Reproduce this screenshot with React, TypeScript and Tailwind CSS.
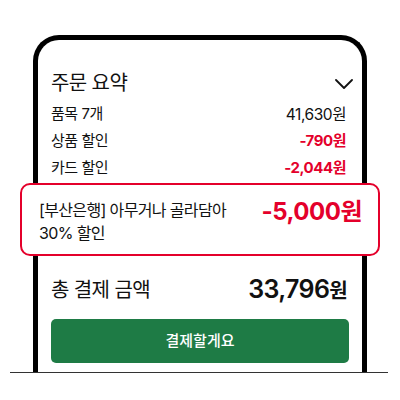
const font = { fontFamily: '"Inter", "Noto Sans CJK KR", sans-serif' };

type Line = { label: string; amount: string; discount?: boolean };

const lines: Line[] = [
  { label: "품목 7개", amount: "41,630" },
  { label: "상품 할인", amount: "-790", discount: true },
  { label: "카드 할인", amount: "-2,044", discount: true },
];

function Chevron() {
  return (
    <svg width="18" height="10" viewBox="0 0 18 10" fill="none">
      <polyline points="1,1 9,9 17,1" stroke="#111" strokeWidth="1.8" strokeLinecap="round" strokeLinejoin="round" />
    </svg>
  );
}

export default function App() {
  return (
    <div className="h-[400px] w-[400px] overflow-hidden bg-white pt-[35px] text-[#111]" style={font}>
      <div className="mx-[33px] flex h-[337px] w-[334px] flex-col rounded-t-[26px] border-[5px] border-b-0 border-black px-[13px] pt-[29px]">
        <div className="flex h-[28px] items-center justify-between">
          <h2 className="text-[20px] leading-[28px] tracking-[-0.03em]">주문 요약</h2>
          <span className="mr-[-4px] mt-[2px]">
            <Chevron />
          </span>
        </div>

        <div className="mt-[4px] flex flex-col">
          {lines.map((l) => (
            <div key={l.label} className="flex h-[27px] items-center justify-between pr-[3px] text-[15px] tracking-[-0.03em]">
              <span>{l.label}</span>
              <span className={l.discount ? "font-bold text-[#e4002b]" : "text-[15.5px]"}>{l.amount}원</span>
            </div>
          ))}
        </div>

        {/* card promo sits above the frame edges */}
        <div className="relative mx-[-31px] mt-[1px] flex h-[73px] items-start justify-between rounded-[10px] border-2 border-[#e4002b] bg-white pl-[17px] pr-[16px] pt-[14px]">
          <p className="text-[16px] leading-[23px] tracking-[-0.04em]">
            [부산은행] 아무거나 골라담아
            <br />
            30% 할인
          </p>
          <span className="mt-[-2px] text-[24px] font-bold leading-[30px] tracking-[-0.02em] text-[#e4002b]">-5,000원</span>
        </div>

        <div className="mt-[16px] flex h-[36px] items-center justify-between pr-[2px]">
          <span className="text-[20px] tracking-[-0.03em]">총 결제 금액</span>
          <span className="font-semibold tracking-[-0.04em]">
            <span className="text-[25px]">33,796</span>
            <span className="text-[20px]">원</span>
          </span>
        </div>

        <button className="mt-[11px] flex h-[44px] w-full items-center justify-center rounded-[5px] bg-[#1e7b45] text-[15px] font-medium text-white">
          결제할게요
        </button>
      </div>
      <div className="ml-[10px] mr-[12px] h-px bg-[#333]" />
    </div>
  );
}
